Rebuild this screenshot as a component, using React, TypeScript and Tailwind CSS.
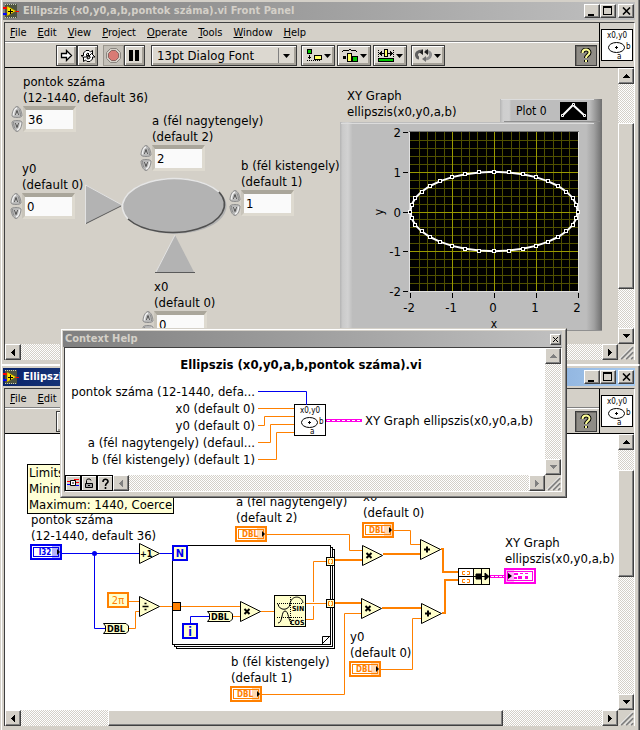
import { useState, type ReactNode } from 'react'

type Dir = 'up' | 'down' | 'left' | 'right'

const MENUS = ['File', 'Edit', 'View', 'Project', 'Operate', 'Tools', 'Window', 'Help']

const ORANGE = '#ff8000'
const BLUE = '#0000f0'
const PINK = '#ff00e6'
const NODE_FILL = '#ffffcc'

const ARROWS: Record<Dir, string> = {
  up: 'M3 0h1v1h1v1h1v1h1v1h-7v-1h1v-1h1v-1h1z',
  down: 'M0 0h7v1h-1v1h-1v1h-1v1h-1v-1h-1v-1h-1v-1h-1z',
  left: 'M3 0h1v7h-1v-1h-1v-1h-1v-1h-1v-1h1v-1h1v-1h1z',
  right: 'M0 0h1v1h1v1h1v1h1v1h-1v1h-1v1h-1v1h-1z',
}

const RAISED = 'border border-t-white border-l-white border-r-[#404040] border-b-[#404040] bg-[#d4d0c8] shadow-[inset_-1px_-1px_0_#808080]'
const CHECKER = 'bg-[conic-gradient(#fff_25%,#d4d0c8_0_50%,#fff_0_75%,#d4d0c8_0)] bg-[length:2px_2px]'

function Arrow({ dir, color = '#000' }: { dir: Dir; color?: string }) {
  const wide = dir === 'up' || dir === 'down'
  return (
    <svg width={wide ? 7 : 4} height={wide ? 4 : 7} shapeRendering="crispEdges" aria-hidden="true">
      <path d={ARROWS[dir]} fill={color} />
    </svg>
  )
}

function ScrollButton({ dir, disabled = false }: { dir: Dir; disabled?: boolean }) {
  return (
    <button
      aria-label={`Scroll ${dir}`}
      disabled={disabled}
      className={`flex h-4 w-4 shrink-0 items-center justify-center ${RAISED}`}
    >
      <Arrow dir={dir} color={disabled ? '#808080' : '#000'} />
    </button>
  )
}

function Grip() {
  return (
    <svg width="16" height="16" className="shrink-0" aria-hidden="true">
      <path d="M3 15L15 3M8 15L15 8M13 15L15 13" stroke="#808080" strokeWidth="2" />
      <path d="M1.500 15L15 1.500M6.500 15L15 6.500M11.500 15L15 11.500" stroke="#fff" />
    </svg>
  )
}

function ViIcon() {
  return (
    <svg width="32" height="32" viewBox="0 0 32 32" className="shrink-0" aria-label="x0,y0 VI icon">
      <rect x="0.500" y="0.500" width="31" height="31" fill="#fff" stroke="#000" />
      <text x="16" y="9" fontSize="8" textAnchor="middle">x0,y0</text>
      <ellipse cx="15.500" cy="18.500" rx="8" ry="5" fill="none" stroke="#000" />
      <path d="M14 18.500h3M15.500 17v3" stroke="#000" />
      <text x="25" y="20" fontSize="8">b</text>
      <text x="16" y="30" fontSize="8">a</text>
    </svg>
  )
}

function LabViewLogo() {
  return (
    <svg width="16" height="16" viewBox="0 0 16 16" className="shrink-0" aria-hidden="true">
      <rect x="2" y="1" width="12" height="14" fill="#4d5340" />
      <path d="M2 1.500h12M2 14.500h12" stroke="#c8ccb8" strokeDasharray="1 1" />
      <path d="M0 5h4" stroke="#f00" strokeWidth="2" />
      <path d="M0 11h4" stroke="#00f" strokeWidth="2" />
      <path d="M12 8.500h4" stroke="#f00" />
      <path d="M4 3L13 8L4 13Z" fill="#ffe600" stroke="#806c00" strokeWidth="0.500" />
      <path d="M5 8.500h5M7.500 6v5" stroke="#000" />
    </svg>
  )
}

function TitleButtons() {
  const cls = `flex h-[14px] w-4 items-center justify-center ${RAISED}`
  return (
    <div className="flex shrink-0 items-center">
      <button aria-label="Minimize" className={cls}>
        <svg width="10" height="9" aria-hidden="true"><path d="M1 7h6v2h-6z" /></svg>
      </button>
      <button aria-label="Maximize" className={cls}>
        <svg width="10" height="10" shapeRendering="crispEdges" aria-hidden="true">
          <path d="M0 0h9v9h-9zM1 2v6h7v-6z" fillRule="evenodd" />
        </svg>
      </button>
      <button aria-label="Close" className={`ml-0.5 ${cls}`}>
        <svg width="9" height="8" aria-hidden="true"><path d="M1 0.500L8 7.500M8 0.500L1 7.500" stroke="#000" strokeWidth="1.600" /></svg>
      </button>
    </div>
  )
}

function ToolButton({ label, wide = false, flat = false, children }: { label: string; wide?: boolean; flat?: boolean; children: ReactNode }) {
  const look = flat
    ? 'border-[#9a968e] bg-[#c4c0b8]'
    : 'border-[#3c3c3c] bg-[#dcd8d0] shadow-[inset_1px_1px_0_#fff,inset_-2px_-2px_0_#a5a198]'
  return (
    <button
      aria-label={label}
      className={`flex h-[21px] shrink-0 items-center justify-center gap-0.5 border ${wide ? 'w-[34px]' : 'w-[21px]'} ${look}`}
    >
      {children}
      {wide && (
        <svg width="7" height="4" aria-hidden="true"><path d="M0 0h7L3.500 4z" /></svg>
      )}
    </button>
  )
}

function Toolbar() {
  return (
    <div className="flex h-[23px] items-center pl-[51px] pr-0.5">
      <ToolButton label="Run">
        <svg width="13" height="13" aria-hidden="true">
          <path d="M1.500 4.500h5v-3l5 5l-5 5v-3h-5z" fill="#fff" stroke="#000" strokeWidth="1.300" />
        </svg>
      </ToolButton>
      <ToolButton label="Run continuously">
        <svg width="16" height="14" viewBox="0 0 16 14" aria-hidden="true">
          <path d="M3.500 6.500V4L6 1.500H9L10.500 3L12.500 1.500V6.500H7.500L9 5L8 4L6.500 5V6.500H8L4.500 9.500L1 6.500Z" fill="#fff" stroke="#000" />
          <path d="M12.500 8V10L10 12.500H7L5.500 11L3.500 12.500V8H8L7 9.500L8 10L10 9V7.500H8.500L11.500 4.500L15 8Z" fill="#fff" stroke="#000" />
        </svg>
      </ToolButton>
      <div className="ml-[5px] flex">
        <ToolButton label="Abort execution" flat>
          <svg width="15" height="15" aria-hidden="true">
            <path d="M4.500 0.500h6l4 4v6l-4 4h-6l-4-4v-6z" fill="#d4d0c8" stroke="#8a8680" />
            <path d="M5.500 2.500h4l3 3v4l-3 3h-4l-3-3v-4z" fill="#d97a74" stroke="#8a6460" />
          </svg>
        </ToolButton>
        <ToolButton label="Pause">
          <svg width="11" height="11" aria-hidden="true"><path d="M0 0h4v11h-4zM6 0h4v11h-4z" /></svg>
        </ToolButton>
      </div>
      <div className="relative ml-[6px] flex h-[21px] w-[146px] shrink-0 items-center border border-[#3c3c3c] bg-[#dcd8d0] shadow-[inset_1px_1px_0_#fff,inset_-2px_-2px_0_#a5a198]">
        <select aria-label="Text settings" className="h-full w-full appearance-none bg-transparent pl-[5px] text-[13px] leading-4 outline-none">
          <option>13pt Dialog Font</option>
          <option>13pt System Font</option>
          <option>13pt Application Font</option>
        </select>
        <span className="pointer-events-none absolute right-[6px] flex h-[15px] items-center border-l border-[#808080] pl-[4px]">
          <svg width="7" height="4" aria-hidden="true"><path d="M0 0h7L3.500 4z" /></svg>
        </span>
      </div>
      <div className="ml-1 flex items-center gap-0.5">
        <ToolButton label="Align objects" wide>
          <svg width="16" height="13" aria-hidden="true">
            <path d="M1 0h5v5h-5z" />
            <path d="M2 1h3v3h-3z" fill="#00c800" />
            <path d="M3 6h1v2h1v1h-1v1h-1v-1h-1v-1h1zM1 11h1v1h-1zM3 11h1v1h-1zM5 11h1v1h-1zM7 11h1v1h-1zM9 11h1v1h-1zM11 11h1v1h-1zM13 11h1v1h-1z" />
            <path d="M8 6h8v5h-8z" />
            <path d="M9 7h6v3h-6z" fill="#ffff66" />
          </svg>
        </ToolButton>
        <ToolButton label="Distribute objects" wide>
          <svg width="16" height="13" aria-hidden="true">
            <path d="M0 2h1v1h-1zM1 1h6v1h-6zM7 0h2v1h-2zM9 1h5v1h-5zM14 2h1v1h-1z" />
            <path d="M1 7h3v3h-3zM5 4h5v9h-5zM10 7h6v6h-6z" />
            <path d="M6 5h3v7h-3z" fill="#ffff66" />
            <path d="M11 8h4v4h-4z" fill="#00c800" />
          </svg>
        </ToolButton>
        <ToolButton label="Resize objects" wide>
          <svg width="16" height="13" aria-hidden="true">
            <path d="M0.500 1v8M15.500 1v8" stroke="#000" strokeDasharray="1 1" />
            <path d="M1 4h1v-1h1v-1h1v2h2v1h-2v2h-1v-1h-1v-1h-1zM15 4h-1v-1h-1v-1h-1v2h-2v1h2v2h1v-1h1v-1h1z" />
            <path d="M6 0h4v8h-4zM0 9h16v4h-16z" />
            <path d="M7 1h2v6h-2z" fill="#ffff66" />
            <path d="M1 10h14v2h-14z" fill="#00c800" />
          </svg>
        </ToolButton>
      </div>
      <div className="ml-1 flex flex-1">
        <ToolButton label="Reorder" wide>
          <svg width="17" height="13" viewBox="0 0 17 13" aria-hidden="true">
            <path d="M7 2C3 2 1 4 1.500 6.500C2 8 3 9 4 9" fill="none" stroke="#606060" strokeWidth="3" />
            <path d="M10 2C14 2 16 4 15.500 6.500C15 9 12 10 10 10" fill="none" stroke="#909090" strokeWidth="3" />
            <path d="M8 0V6L4.500 3.500ZM13 0V6L9 3Z" fill="#202020" />
            <path d="M11 7V13L7 10Z" fill="#707070" />
          </svg>
        </ToolButton>
      </div>
      <button aria-label="Show context help" className="flex h-[21px] w-[22px] shrink-0 items-center justify-center border border-[#3c3c3c] bg-[#8f8c86] shadow-[inset_1px_1px_0_#6f6c66]">
        <svg width="12" height="15" aria-hidden="true">
          <path d="M2.500 5C2.500 0.500 9.500 0.500 9.500 4.500C9.500 7 6 7 6 10M6 12v2" fill="none" stroke="#000" strokeWidth="4" />
          <path d="M2.500 5C2.500 0.500 9.500 0.500 9.500 4.500C9.500 7 6 7 6 10M6 12v2" fill="none" stroke="#ffff99" strokeWidth="2" />
        </svg>
      </button>
    </div>
  )
}

interface WindowProps {
  title: string
  active?: boolean
  menus?: string[]
  hThumb?: string
  vThumb: string
  children: ReactNode
}

function ViWindow({ title, active = false, menus = MENUS, hThumb, vThumb, children }: WindowProps) {
  const bar = active
    ? 'bg-gradient-to-r from-[#0a246a] to-[#a6caf0] text-white'
    : 'bg-gradient-to-r from-[#808080] to-[#c0c0c0] text-[#d4d0c8]'
  return (
    <section className={`border-r border-l border-l-white border-r-[#404040] pl-px pr-1 pb-1 pt-0.5 shadow-[inset_-1px_0_0_#808080] ${active ? 'border-t border-t-white' : 'border-b border-b-white'}`}>
      <header className={`flex h-[18px] items-center pr-px ${bar}`}>
        <LabViewLogo />
        <h1 className="min-w-0 flex-1 truncate pl-1 text-[11px] font-bold leading-4">{title}</h1>
        <TitleButtons />
      </header>

      <div className="ml-px mt-0.5 border-t border-l border-r border-t-[#404040] border-l-[#404040] border-r-white">
        <div className="flex border-b border-black">
          <div className="min-w-0 flex-1">
            <nav className="flex h-[19px] items-center gap-[11px] border-b border-[#808080] pl-[5px] pt-px text-[11px] leading-4">
              {menus.map((name) => (
                <button key={name}>
                  <span className="underline">{name[0]}</span>
                  {name.slice(1)}
                </button>
              ))}
            </nav>
            <div className="border-t border-white pt-px">
              <Toolbar />
            </div>
          </div>
          <div className="flex w-[35px] items-center justify-center border-l border-black">
            <ViIcon />
          </div>
        </div>

        <div className="flex">
          {children}
          <div className={`flex w-4 shrink-0 flex-col ${CHECKER}`}>
            <ScrollButton dir="up" />
            <div className="relative flex-1">
              <div className={`absolute w-full ${vThumb} ${RAISED}`} />
            </div>
            <ScrollButton dir="down" />
          </div>
        </div>

        <div className="flex h-4">
          <div className={`flex flex-1 ${CHECKER}`}>
            <ScrollButton dir="left" />
            <div className="relative flex-1">
              {hThumb && <div className={`absolute h-full ${hThumb} ${RAISED}`} />}
            </div>
            <ScrollButton dir="right" />
          </div>
          <Grip />
        </div>
      </div>
    </section>
  )
}

function SpinButton({ down = false, label, onClick }: { down?: boolean; label: string; onClick: () => void }) {
  return (
    <button aria-label={label} onClick={onClick} className="block">
      <svg width="12" height="13" viewBox="0 0 12 13" className={down ? 'rotate-180' : ''} aria-hidden="true">
        <path d="M6 0.500C9 1 11 6 11 10C10 12 2 12 1 10C1 6 3 1 6 0.500Z" fill="#b9b9b9" stroke="#8e8e8e" />
        <path d="M2.500 9.500C2.500 6 4 2.500 6 2" fill="none" stroke="#f2f2f2" strokeWidth="1.500" />
        <path d="M9.500 10C9.500 8 9 5 8 3.500" fill="none" stroke="#8a8a8a" />
        <path d="M4.500 9L6 4.500L7.500 9" fill="#dcdcdc" stroke="#404040" strokeWidth="0.900" />
      </svg>
    </button>
  )
}

interface ControlProps {
  id: string
  lines: [string, string]
  initial: number
  place: string
}

function NumericControl({ id, lines, initial, place }: ControlProps) {
  const [value, setValue] = useState(String(initial))
  const step = (by: number) => setValue(String(Number(value) + by))

  return (
    <div className={`absolute ${place}`}>
      <label htmlFor={id} className="block whitespace-nowrap pl-3 text-[13px] leading-4">
        {lines[0]}
        <br />
        {lines[1]}
      </label>
      <div className="flex">
        <div className="flex flex-col">
          <SpinButton label={`Increment ${lines[0]}`} onClick={() => step(1)} />
          <SpinButton down label={`Decrement ${lines[0]}`} onClick={() => step(-1)} />
        </div>
        <input
          id={id}
          value={value}
          onChange={(e) => setValue(e.target.value)}
          className="h-[26px] w-[53px] border-[3px] border-t-4 border-t-[#aaa69b] border-l-[#c8c4ba] border-r-[#dedad0] border-b-[#dedad0] bg-[#fafafa] px-0.5 text-[13px] leading-4 outline-none"
        />
      </div>
    </div>
  )
}

function Label({ lines, place }: { lines: [string, string]; place: string }) {
  return (
    <p className={`absolute whitespace-nowrap text-[13px] leading-4 ${place}`}>
      {lines[0]}
      <br />
      {lines[1]}
    </p>
  )
}

// graph units -> panel coordinates
const gx = (v: number) => 494 + v * 41.8
const gy = (v: number) => 211.5 + v * -39.7

const POINTS = Array.from({ length: 36 }, (_, i) => {
  const t = (i * 2 * Math.PI) / 36
  return [gx(2 * Math.cos(t)), gy(Math.sin(t))]
})
const MINOR = Array.from({ length: 19 }, (_, i) => -1.8 + i * 0.2)
const TICKS = [-2, -1, 0, 1, 2]

function XYGraph() {
  return (
    <g>
      <defs>
        <linearGradient id="frame" gradientUnits="userSpaceOnUse" x1="340" x2="602" y1="0" y2="0">
          <stop offset="0" stopColor="#b4b4b4" />
          <stop offset="0.010" stopColor="#cacaca" />
          <stop offset="0.030" stopColor="#d2d2d2" />
          <stop offset="0.048" stopColor="#bdbdbd" />
          <stop offset="0.940" stopColor="#bdbdbd" />
          <stop offset="0.970" stopColor="#a0a0a0" />
          <stop offset="1" stopColor="#6e6e6e" />
        </linearGradient>
        <linearGradient id="legend" gradientUnits="userSpaceOnUse" x1="500" x2="602" y1="0" y2="0">
          <stop offset="0" stopColor="#b4b4b4" />
          <stop offset="0.030" stopColor="#cecece" />
          <stop offset="0.090" stopColor="#d0d0d0" />
          <stop offset="0.110" stopColor="#bdbdbd" />
          <stop offset="0.880" stopColor="#bdbdbd" />
          <stop offset="1" stopColor="#707070" />
        </linearGradient>
      </defs>
      <rect x="340" y="122" width="262" height="209" fill="url(#frame)" />
      <path d="M341 123.500H594" stroke="#dcdcdc" />
      <path d="M352 330.500H602" stroke="#909090" />
      <rect x="500" y="99" width="102" height="23" fill="url(#legend)" />
      <path d="M501 99.500H594" stroke="#dcdcdc" />
      <path d="M504 121.500H600" stroke="#8e8e8e" />
      <text x="516" y="115" fontSize="12">Plot 0</text>
      <rect x="560" y="102" width="27" height="18" fill="#000" />
      <path d="M562 116L573 105L585 116" fill="none" stroke="#fff" strokeWidth="2" />
      <path d="M561.500 114.500h2v2h-2zM572.500 103.500h2v2h-2zM583.500 114.500h2v2h-2z" fill="#000" stroke="#fff" />

      <rect x="409.500" y="131.500" width="169" height="160" fill="#000" stroke="#e0e0e0" />
      <path d="M409 131.500H579" stroke="#707070" />
      {MINOR.map((v) => (
        <path key={v} d={`M${Math.round(gx(v))}.5 132V291M410 ${Math.round(gy(v))}.5H578`} stroke="#505000" />
      ))}
      {[-1, 0, 1].map((v) => (
        <path key={v} d={`M${Math.round(gx(v))}.5 132V291M410 ${Math.round(gy(v))}.5H578`} stroke="#999900" />
      ))}
      <polygon points={POINTS.map((p) => p.join(',')).join(' ')} fill="none" stroke="#fff" strokeWidth="2" />
      {POINTS.map(([x, y], i) => (
        <rect key={i} x={Math.round(x) - 1.5} y={Math.round(y) - 1.5} width="3" height="3" fill="#000" stroke="#fff" />
      ))}
      {TICKS.map((v) => (
        <g key={v} fontSize="13">
          <path d={`M403 ${Math.round(gy(v))}.5h5M${Math.round(gx(v))}.5 293v5`} stroke="#000" />
          <text x="401" y={Math.round(gy(v)) + 5} textAnchor="end">{v}</text>
          <text x={Math.round(gx(v)) - 1} y="312" textAnchor="middle">{v}</text>
        </g>
      ))}
      <text x="494" y="328" fontSize="12" textAnchor="middle">x</text>
      <text transform="translate(383 212) rotate(-90)" fontSize="12" textAnchor="middle">y</text>
    </g>
  )
}

function FrontPanel() {
  return (
    <div className="relative h-[276px] min-w-0 flex-1 overflow-hidden">
      <svg width="613" height="276" viewBox="5 68 613 276" aria-label="Front panel">
        <path d="M86 185V224L122 205Z" fill="#b3b3b3" />
        <path d="M85.500 224V185L122 205" fill="none" stroke="#e2e2e2" />
        <path d="M86 223.500L121 206" stroke="#5a5a5a" />
        <path d="M175 235L156 272H194Z" fill="#b3b3b3" />
        <path d="M156 272L175 235" stroke="#e2e2e2" />
        <path d="M155 272.500H195" stroke="#5a5a5a" />
        <ellipse cx="174.500" cy="206" rx="52" ry="28" fill="#b3b3b3" />
        <path d="M128 219A52 28 0 0 1 219 192" fill="none" stroke="#e6e6e6" strokeWidth="1.500" />
        <path d="M219 192A52 28 0 0 1 128 219" fill="none" stroke="#505050" strokeWidth="1.500" />
        <XYGraph />
      </svg>
      <NumericControl id="pontok" lines={['pontok száma', '(12-1440, default 36)']} initial={36} place="left-[6px] top-[6px]" />
      <NumericControl id="a" lines={['a (fél nagytengely)', '(default 2)']} initial={2} place="left-[135px] top-[45px]" />
      <NumericControl id="y0" lines={['y0', '(default 0)']} initial={0} place="left-[5px] top-[93px]" />
      <NumericControl id="b" lines={['b (fél kistengely)', '(default 1)']} initial={1} place="left-[224px] top-[90px]" />
      <NumericControl id="x0" lines={['x0', '(default 0)']} initial={0} place="left-[137px] top-[211px]" />
      <Label lines={['XY Graph', 'ellipszis(x0,y0,a,b)']} place="left-[342px] top-[20px]" />
    </div>
  )
}

function Terminal({ x, y, text, color = ORANGE }: { x: number; y: number; text: string; color?: string }) {
  return (
    <g transform={`translate(${x} ${y})`}>
      <rect x="1" y="1" width="30" height="14" fill="#fff" stroke={color} strokeWidth="2" />
      <rect x="3.500" y="3.500" width="25" height="9" fill="none" stroke={color} />
      <text x="15" y="11" fontSize="8" fontWeight="bold" textAnchor="middle" fill={color}>{text}</text>
      <rect x="22" y="2" width="8" height="12" fill={color} opacity="0.300" />
      <path d="M27 5V11L30 8Z" />
    </g>
  )
}

function Convert({ x, y }: { x: number; y: number }) {
  return (
    <g transform={`translate(${x} ${y})`}>
      <path d="M0.500 0.500H23L25.500 3V8L23 10.500H0.500L2.500 8V3Z" fill={NODE_FILL} stroke="#000" />
      <text x="13" y="9" fontSize="9" fontWeight="bold" textAnchor="middle">DBL</text>
    </g>
  )
}

const OPS = {
  add: 'M4 10.500h6M7 7.500v6',
  mul: 'M4.500 8L9.500 13M9.500 8L4.500 13',
  div: 'M3.500 10.500h6M5.500 7.500h2M5.500 13.500h2',
}

function Fn({ x, y, op }: { x: number; y: number; op: keyof typeof OPS | 'inc' }) {
  return (
    <g transform={`translate(${x} ${y})`}>
      <path d="M0.500 0.500L20.500 10.500L0.500 20.500Z" fill={NODE_FILL} stroke="#000" />
      {op === 'inc' ? (
        <text x="1" y="14" fontSize="9" fontWeight="bold">+1</text>
      ) : (
        <path d={OPS[op]} stroke="#000" strokeWidth={op === 'div' ? 1.5 : 2} />
      )}
    </g>
  )
}

function Tunnel({ x, y }: { x: number; y: number }) {
  return (
    <g transform={`translate(${x} ${y})`}>
      <rect x="0.500" y="0.500" width="8" height="8" fill={NODE_FILL} stroke="#000" />
      <path d="M4 2.500H2.500V6.500H4M5 2.500H6.500V6.500H5" fill="none" stroke={ORANGE} />
    </g>
  )
}

function DiagramDrawing() {
  return (
    <svg width="613" height="276" viewBox="5 434 613 276" aria-label="Block diagram">
      {/* for loop */}
      <rect x="176.500" y="549.500" width="158" height="99" fill="#fff" stroke="#000" />
      <rect x="174.500" y="547.500" width="158" height="99" fill="#fff" stroke="#000" />
      <rect x="172.500" y="545.500" width="158" height="99" fill="#fff" stroke="#000" />
      <path d="M322.500 644V636.500H330M322 644L330 636" fill="none" stroke="#000" />

      {/* integer wires */}
      <path d="M62 553.500H140M160 553.500H172M94.500 553.500V628.500H105M190.500 624V616.500H209" fill="none" stroke={BLUE} />
      <circle cx="94.500" cy="553.500" r="2.500" fill={BLUE} />

      {/* scalar wires */}
      <g fill="none" stroke={ORANGE}>
        <path d="M129 601.500H140M129 628.500H135.500V611.500H140M160 606.500H241M232 616.500H241M261 611.500H275" />
        <path d="M306 603.500H327M306 619.500H313.500V606M313.500 602V561.500H327" />
        <path d="M267 534.500H349.500V550.500H363M394 530.500H410.500V544.500H421" />
        <path d="M262 694.500H344.500V613.500H362M381 669.500H412.500V618.500H422" />
      </g>

      {/* array wires */}
      <g fill="none" stroke={ORANGE} strokeWidth="2">
        <path d="M335 560H363M335 603H362M383 554H421M382 608H422M441 549H443V572H459M442 613H445V580H459" />
      </g>

      <Terminal x={30} y={544} text="I32" color={BLUE} />
      <Terminal x={235} y={526} text="DBL" />
      <Terminal x={362} y={522} text="DBL" />
      <Terminal x={349} y={661} text="DBL" />
      <Terminal x={230} y={686} text="DBL" />

      <rect x="173" y="546" width="14" height="14" fill={NODE_FILL} stroke={BLUE} strokeWidth="2" />
      <text x="180" y="557" fontSize="11" fontWeight="bold" textAnchor="middle" fill={BLUE}>N</text>
      <rect x="183" y="624" width="14" height="14" fill={NODE_FILL} stroke={BLUE} strokeWidth="2" />
      <text x="190" y="636" fontSize="12" fontWeight="bold" textAnchor="middle" fill={BLUE}>i</text>
      <rect x="108" y="593" width="20" height="14" fill={NODE_FILL} stroke={ORANGE} strokeWidth="2" />
      <text x="118" y="604" fontSize="11" textAnchor="middle" fill={ORANGE}>2π</text>
      <rect x="172.500" y="602.500" width="8" height="8" fill={ORANGE} stroke="#000" />

      <Convert x={103} y={623} />
      <Convert x={207} y={611} />
      <Fn x={139} y={543} op="inc" />
      <Fn x={139} y={596} op="div" />
      <Fn x={240} y={601} op="mul" />
      <Fn x={362} y={545} op="mul" />
      <Fn x={361} y={598} op="mul" />
      <Fn x={420} y={539} op="add" />
      <Fn x={421} y={603} op="add" />
      <Tunnel x={326} y={557} />
      <Tunnel x={326} y={599} />

      {/* sine & cosine */}
      <rect x="274.500" y="595.500" width="31" height="31" fill={NODE_FILL} stroke="#000" />
      <path d="M277 603.500H303M277 617.500H303M290.500 597V625" stroke="#000" strokeDasharray="1 1" />
      <path d="M278 604C279 611 289 611 290 604C291 595 302 595 303 603M278 623C283 623 281 611 285 611C289 611 288 622 292 623" fill="none" stroke="#000" />
      <rect x="292" y="605" width="13" height="6" fill={NODE_FILL} />
      <rect x="292" y="619" width="13" height="6" fill={NODE_FILL} />
      <text x="292" y="611" fontSize="7" fontWeight="bold">SIN</text>
      <text x="290" y="625" fontSize="7" fontWeight="bold">COS</text>

      {/* build XY cluster */}
      <rect x="458.500" y="568.500" width="31" height="16" fill={NODE_FILL} stroke="#000" />
      <rect x="459" y="569" width="14" height="15" fill="#fff" />
      <path d="M458 576.500H473M473.500 568V585M481.500 568V585" stroke="#000" />
      <path d="M465 571.500H462.500V574.500H465M467 571.500H469.500V574.500H467M465 579.500H462.500V582.500H465M467 579.500H469.500V582.500H467" fill="none" stroke={ORANGE} />
      <path d="M474 576.500H488M476 574h5v5h-5zM485 573L489 576.500L485 580Z" stroke="#000" />

      <path d="M490 576.500H505" stroke={PINK} strokeWidth="3" />
      <path d="M491 576.500H505" stroke="#fff" strokeDasharray="3 1" />
      <rect x="505" y="569" width="30" height="14" fill="#fff" stroke={PINK} strokeWidth="2" />
      <rect x="507.500" y="571.500" width="25" height="9" fill="none" stroke={PINK} />
      <rect x="506" y="570" width="8" height="12" fill={PINK} opacity="0.300" />
      <path d="M508 573V579L512 576Z" />
      <path d="M514 573h4v2h-4zM520 573h3v1h-3zM525 573h3v1h-3zM514 577h3v2h-3zM518 576h4v3h-4zM525 576h3v3h-3z" fill={PINK} />
    </svg>
  )
}

function BlockDiagram() {
  return (
    <div className="relative h-[276px] min-w-0 flex-1 overflow-hidden bg-white">
      <DiagramDrawing />
      <Label lines={['pontok száma', '(12-1440, default 36)']} place="left-[26px] top-[78px]" />
      <Label lines={['a (fél nagytengely)', '(default 2)']} place="left-[231px] top-[60px]" />
      <Label lines={['x0', '(default 0)']} place="left-[358px] top-[55px]" />
      <Label lines={['XY Graph', 'ellipszis(x0,y0,a,b)']} place="left-[500px] top-[101px]" />
      <Label lines={['y0', '(default 0)']} place="left-[345px] top-[195px]" />
      <Label lines={['b (fél kistengely)', '(default 1)']} place="left-[226px] top-[220px]" />
      <div role="tooltip" className="absolute left-[22px] top-[30px] whitespace-nowrap border border-black bg-[#ffffd5] px-px text-[13px] leading-4">
        <p>Limits</p>
        <p>Minimum: 12, Coerce</p>
        <p>Maximum: 1440, Coerce</p>
      </div>
    </div>
  )
}

const TERMINALS = [
  'pontok száma (12-1440, defa...',
  'x0 (default 0)',
  'y0 (default 0)',
  'a (fél nagytengely) (defaul...',
  'b (fél kistengely) (default 1)',
]

function ContextHelp() {
  const tool = 'flex h-4 w-4 shrink-0 items-center justify-center border border-black bg-[#d4d0c8] shadow-[inset_1px_1px_0_#fff]'
  return (
    <aside aria-label="Context Help" className="absolute left-[60px] top-[328px] w-[507px] border border-t-[#d4d0c8] border-l-[#d4d0c8] border-r-[#404040] border-b-[#404040] bg-[#d4d0c8]">
      <div className="border border-t-white border-l-white border-r-[#808080] border-b-[#808080] pb-1 pl-px pr-[3px] pt-px">
        <header className="flex h-4 items-center bg-gradient-to-r from-[#808080] to-[#c0c0c0] pl-0.5 pr-px text-[#d4d0c8]">
          <h2 className="flex-1 text-[11px] font-bold leading-4">Context Help</h2>
          <button aria-label="Close context help" className={`flex h-[11px] w-[11px] items-center justify-center ${RAISED}`}>
            <svg width="7" height="7" aria-hidden="true"><path d="M1 1L6 6M6 1L1 6" stroke="#000" /></svg>
          </button>
        </header>

        <div className="ml-px border border-t-[#404040] border-l-[#404040] border-r-white border-b-white">
          <div className="flex">
            <div className="h-[127px] min-w-0 flex-1 bg-white pr-2">
              <h3 className="pt-[9px] text-center text-[13px] font-bold leading-4">Ellipszis (x0,y0,a,b,pontok száma).vi</h3>
              <div className="mt-[10px] flex">
                <ul className="w-[190px] shrink-0 whitespace-nowrap text-right text-[13px] leading-[17px]">
                  {TERMINALS.map((name) => (
                    <li key={name}>{name}</li>
                  ))}
                </ul>
                <div className="ml-[3px] flex shrink-0 items-start">
                  <svg width="37" height="85" viewBox="258 383 37 85" className="-mr-px" fill="none" aria-hidden="true">
                    <path d="M258 408.500H295M258 425.500H264.500V416.500H295M258 442.500H270.500V424.500H295M258 459.500H276.500V432.500H295" stroke={ORANGE} />
                  </svg>
                  <div className="pt-[21px]">
                    <ViIcon />
                  </div>
                  <svg width="36" height="3" className="mt-[36px]" aria-hidden="true">
                    <path d="M0 1.500H36" stroke={PINK} strokeWidth="3" />
                    <path d="M1 1.500H36" stroke="#fff" strokeDasharray="3 2" />
                  </svg>
                  <svg width="50" height="22" viewBox="258 383 50 22" className="pointer-events-none absolute" fill="none" aria-hidden="true">
                    <path d="M258 391.500H306.500V405" stroke={BLUE} />
                  </svg>
                </div>
                <span className="whitespace-nowrap pl-[3px] pt-[30px] text-[13px] leading-4">XY Graph ellipszis(x0,y0,a,b)</span>
              </div>
            </div>
            <div className={`flex w-4 shrink-0 flex-col justify-between ${CHECKER}`}>
              <ScrollButton dir="up" disabled />
              <ScrollButton dir="down" disabled />
            </div>
          </div>
          <div className="flex h-4">
            <button aria-label="Show optional terminals" className={tool}>
              <svg width="12" height="10" aria-hidden="true">
                <path d="M0 3.500h4M7 1.500h5M8 4.500h4" stroke="#f00" />
                <path d="M0 6.500h4M8 7.500h4" stroke="#00f" />
                <path d="M3.500 2.500h5v5h-5zM5 5h2" fill="#fff" stroke="#000" />
              </svg>
            </button>
            <button aria-label="Lock context help" className={tool}>
              <svg width="10" height="11" aria-hidden="true">
                <path d="M2.500 5V2.500L3.500 1H6L7 2.500" fill="none" stroke="#000" />
                <path d="M1.500 5.500h7v4h-7z" fill="#a0a0a0" stroke="#000" />
                <path d="M4 7.500h2" stroke="#000" />
              </svg>
            </button>
            <button aria-label="Detailed help" className={tool}>
              <svg width="9" height="11" aria-hidden="true">
                <path d="M2 4C2 0.500 7 0.500 7 3.500C7 5.500 4.500 5 4.500 8M4.500 9v2" fill="none" stroke="#000" strokeWidth="1.600" />
              </svg>
            </button>
            <div className={`flex flex-1 justify-between ${CHECKER}`}>
              <ScrollButton dir="left" disabled />
              <ScrollButton dir="right" disabled />
            </div>
            <Grip />
          </div>
        </div>
      </div>
    </aside>
  )
}

export default function App() {
  return (
    <main className="relative bg-[#d4d0c8] pl-px font-['DejaVu_Sans_Condensed','DejaVu_Sans','Noto_Sans',sans-serif] text-black">
      <ViWindow title="Ellipszis (x0,y0,a,b,pontok száma).vi Front Panel" vThumb="top-[16%] bottom-[16%]">
        <FrontPanel />
      </ViWindow>
      <ViWindow
        title="Ellipszis (x0,y0,a,b,pontok száma).vi Block Diagram"
        active
        menus={MENUS.slice(0, 2)}
        hThumb="left-[15%] right-[17%]"
        vThumb="top-[8%] bottom-[48%]"
      >
        <BlockDiagram />
      </ViWindow>
      <ContextHelp />
    </main>
  )
}
